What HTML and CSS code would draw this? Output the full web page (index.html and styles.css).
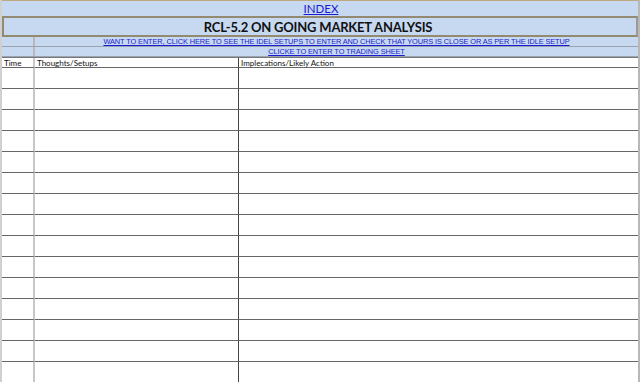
FILE: index.html
```html
<!DOCTYPE html>
<html>
<head>
<meta charset="utf-8">
<link rel="stylesheet" href="styles.css">
</head>
<body>
<div class="sheet">
  <div class="index-row"><a class="link index-link" href="#">INDEX</a></div>
  <div class="title-row">RCL-5.2 ON GOING MARKET ANALYSIS</div>
  <div class="link-row"><div class="stub"></div><div class="link-cell"><a class="link small" href="#">WANT TO ENTER, CLICK HERE TO SEE THE IDEL SETUPS TO ENTER AND CHECK THAT YOURS IS CLOSE OR AS PER THE IDLE SETUP</a></div></div>
  <div class="link-row"><div class="stub"></div><div class="link-cell"><a class="link small" href="#">CLICKE TO ENTER TO TRADING SHEET</a></div></div>
  <div class="grid">
    <div class="hcell c1">Time</div><div class="hcell c2">Thoughts/Setups</div><div class="hcell c3">Implecations/Likely Action</div>
    <div class="cell c1"></div><div class="cell c2"></div><div class="cell c3"></div>
    <div class="cell c1"></div><div class="cell c2"></div><div class="cell c3"></div>
    <div class="cell c1"></div><div class="cell c2"></div><div class="cell c3"></div>
    <div class="cell c1"></div><div class="cell c2"></div><div class="cell c3"></div>
    <div class="cell c1"></div><div class="cell c2"></div><div class="cell c3"></div>
    <div class="cell c1"></div><div class="cell c2"></div><div class="cell c3"></div>
    <div class="cell c1"></div><div class="cell c2"></div><div class="cell c3"></div>
    <div class="cell c1"></div><div class="cell c2"></div><div class="cell c3"></div>
    <div class="cell c1"></div><div class="cell c2"></div><div class="cell c3"></div>
    <div class="cell c1"></div><div class="cell c2"></div><div class="cell c3"></div>
    <div class="cell c1"></div><div class="cell c2"></div><div class="cell c3"></div>
    <div class="cell c1"></div><div class="cell c2"></div><div class="cell c3"></div>
    <div class="cell c1"></div><div class="cell c2"></div><div class="cell c3"></div>
    <div class="cell c1"></div><div class="cell c2"></div><div class="cell c3"></div>
    <div class="cell c1"></div><div class="cell c2"></div><div class="cell c3"></div>
  </div>
</div>
</body>
</html>
```

FILE: styles.css
```css
html, body {
  margin: 0;
  padding: 0;
  background: #ffffff;
}
body {
  width: 640px;
  height: 382px;
  overflow: hidden;
  font-family: Lato, "Open Sans", sans-serif;
}
.sheet {
  width: 640px;
  border-left: 2px solid #d0d0d0;
  border-right: 2px solid #b8b8b8;
  box-sizing: border-box;
}
.link {
  color: #1a1ad0;
  text-decoration: underline;
}
.index-row {
  height: 15px;
  border-top: 1px solid #bfa97c;
  background: #c6d9f1;
  display: flex;
  justify-content: center;
  align-items: center;
}
.index-link {
  font-size: 11.5px;
  line-height: 15px;
  padding-left: 2px;
}
.title-row {
  height: 17px;
  border: 2px solid #948a72;
  border-right-color: #9a9a9a;
  background: #c6d9f1;
  display: flex;
  justify-content: center;
  align-items: center;
  font-weight: 700;
  font-size: 13px;
  color: #111;
  letter-spacing: -0.2px;
  padding-right: 4px;
}
.link-row {
  height: 9px;
  display: flex;
  background: #c6d9f1;
  border-bottom: 1px solid #9aa4b0;
}
.stub {
  width: 31px;
  border-right: 2px solid #b8b8b8;
}
.link-cell {
  flex: 1;
  display: flex;
  justify-content: center;
  align-items: center;
  overflow: hidden;
}
.small {
  font-family: "Liberation Sans", sans-serif;
  font-size: 7.4px;
  line-height: 9px;
  white-space: nowrap;
  letter-spacing: -0.1px;
}
.grid {
  display: grid;
  grid-template-columns: 33px 204px 1fr;
  grid-template-rows: 10px repeat(15, 21px);
  border-top: 1px solid #777;
}
.hcell {
  font-size: 8px;
  line-height: 10px;
  color: #111;
  padding-left: 2px;
  border-bottom: 1px solid #666;
}
.cell {
  border-bottom: 1px solid #666;
}
.c1 {
  border-right: 2px solid #c8c8c8;
}
.c2 {
  border-right: 1px solid #444;
}
```
